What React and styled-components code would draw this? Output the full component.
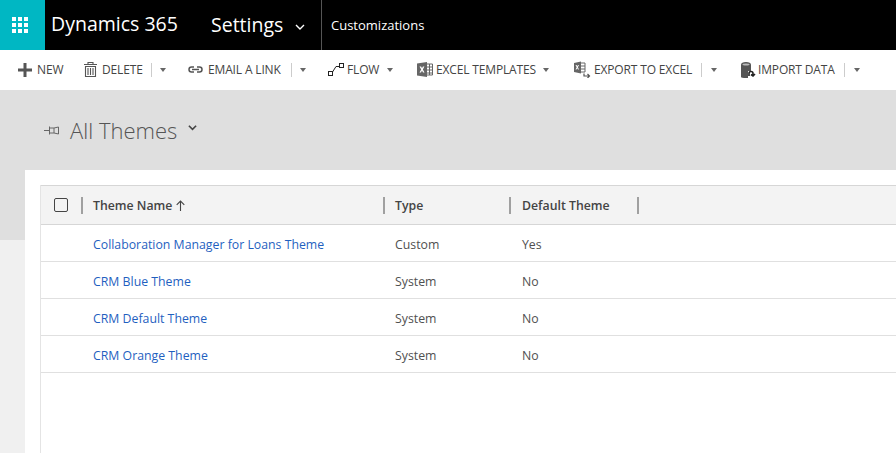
import React from "react";
import styled, { createGlobalStyle } from "styled-components";

const Global = createGlobalStyle`
  html, body { margin: 0; padding: 0; height: 100%; overflow: hidden; background: #f0f0f0; }
  body { font-family: "Open Sans", "Noto Sans", "Liberation Sans", sans-serif; }
  #root { height: 100%; }
`;
const Page = styled.div`display:flex;flex-direction:column;width:896px;height:453px;overflow:hidden;`;
const TopBar = styled.header`display:flex;align-items:stretch;height:50px;background:#000;color:#fff;flex:none;`;
const Tile = styled.div`width:45px;background:#00b7c3;display:flex;align-items:center;padding-left:12px;box-sizing:border-box;`;
const Brand = styled.div`width:166px;padding-left:6px;box-sizing:border-box;font-size:19.500px;line-height:48px;white-space:nowrap;`;
const Area = styled.div`display:flex;align-items:center;width:110px;font-size:19.500px;line-height:48px;gap:12px;`;
const AreaCaret = styled.span`display:flex;margin-top:3px;`;
const Crumb = styled.div`border-left:1px solid #555;padding-left:9px;font-size:13px;line-height:51px;`;
const Toolbar = styled.nav`height:40px;background:#fff;flex:none;position:relative;`;
const Cmd = styled.div`position:absolute;left:${p=>p.$x}px;top:0;height:39px;display:flex;align-items:center;color:#444;font-size:12px;font-weight:500;white-space:nowrap;letter-spacing:-.15px;`;
const Label = styled.span`margin-left:${p=>p.$m ?? 3}px;`;
const Split = styled.span`width:1px;height:14px;background:#ccc;margin-left:${p=>p.$m ?? 9}px;`;
const Caret = styled.span`width:0;height:0;border-left:3.500px solid transparent;border-right:3.500px solid transparent;border-top:4px solid #666;margin-left:${p=>p.$m ?? 9}px;`;
const Content = styled.main`flex:1;background:linear-gradient(#dfdfdf 150px,#f0f0f0 150px);display:flex;flex-direction:column;`;
const TitleRow = styled.div`height:80px;display:flex;align-items:center;padding-left:44px;box-sizing:border-box;color:#555;flex:none;`;
const Title = styled.h1`margin:0 0 0 11px;font-size:22px;font-weight:300;line-height:84px;color:#555;`;
const TitleCaret = styled.span`display:flex;margin:-6px 0 0 11px;`;
const Card = styled.section`flex:1;margin-left:25px;background:#fff;padding:15px 0 0 15px;`;
const Grid = styled.div`height:100%;border-left:1px solid #e4e4e4;`;
const HeadRow = styled.div`height:38px;display:flex;align-items:center;background:#f3f3f3;border-top:1px solid #d6d6d6;border-bottom:1px solid #d6d6d6;position:relative;`;
const Check = styled.span`width:12px;height:12px;border:1px solid #444;border-radius:2px;margin-left:13px;flex:none;`;
const Bar = styled.span`position:absolute;left:${p=>p.$x}px;top:11px;width:2px;height:17px;background:#a0a0a0;`;
const Th = styled.span`position:absolute;left:${p=>p.$x}px;font-size:12.300px;font-weight:600;color:#444;white-space:nowrap;display:flex;align-items:center;gap:4px;`;
const Row = styled.div`height:37px;display:flex;align-items:center;padding-top:2px;box-sizing:border-box;border-bottom:1px solid #e0e0e0;font-size:12.300px;color:#505050;`;
const NameCell = styled.a`width:302px;margin-left:52px;color:#1f5fbf;white-space:nowrap;flex:none;`;
const TypeCell = styled.span`width:127px;flex:none;`;

const Waffle = () => (
  <svg width="16" height="16" viewBox="0 0 16 16" fill="#fff">
    {[0,6,12].flatMap(y=>[0,6,12].map(x=><rect key={x+"-"+y} x={x} y={y} width="4" height="4"/>))}
  </svg>
);
const Chevron = ({s=10,c="#fff",w=1.4}) => (
  <svg width={s} height={s} viewBox="0 0 10 10" fill="none" stroke={c} strokeWidth={w}><path d="M1 3l4 4 4-4"/></svg>
);
const Plus = () => <svg width="14" height="14" viewBox="0 0 14 14" fill="#555"><path d="M5.500 0h3v5.500H14v3H8.500V14h-3V8.500H0v-3h5.500z"/></svg>;
const Trash = () => <svg width="13" height="15" viewBox="0 0 13 15" fill="none" stroke="#555"><path d="M0 2.500h13M4 2.500V.5h5v2M1.500 4.500h10V14.500h-10zM4 6v7M6.500 6v7M9 6v7" strokeWidth="1.100"/></svg>;
const LinkIcon = () => <svg width="15" height="8" viewBox="0 0 15 8" fill="none" stroke="#555" strokeWidth="1.500"><path d="M6 1H3.500a2.500 2.500 0 000 5H6M9 1h2.500a2.500 2.500 0 010 5H9M4 3.500h7"/></svg>;
const FlowIcon = () => <svg width="16" height="13" viewBox="0 0 16 13" fill="none" stroke="#222"><rect x=".5" y="8.500" width="4" height="4"/><rect x="11.500" y=".5" width="4" height="4"/><path d="M4.500 9L8 3.500h3.500"/></svg>;
const XlIcon = () => <svg width="16" height="15" viewBox="0 0 16 15"><path fill="#666" d="M0 1.500L10 0v15L0 13.500z"/><path fill="#fff" d="M2.500 4.500h1.600L5 6.300l.9-1.800h1.500L5.900 7.500l1.600 3H6l-1-2-1 2H2.500l1.700-3z"/><path fill="none" stroke="#666" d="M10 2h5.500v11H10M10 5h5.500M10 8h5.500M10 11h5.500M12.500 2v11"/></svg>;
const ExportIcon = () => <svg width="17" height="17" viewBox="0 0 17 17"><path fill="#666" d="M0 2l7-1.500v12L0 11z"/><path fill="#fff" d="M1.500 4h1l.8 1.300L4 4h1L3.900 6.300 5 8.500H4L3.300 7.200 2.500 8.500h-1l1.200-2.200z"/><path fill="none" stroke="#666" d="M7 2h4v9H7M7 5h4M7 8h4"/><path fill="none" stroke="#555" strokeWidth="1.200" d="M10 12.500v2.500h5M13.500 13l2 2-2 2"/></svg>;
const DbIcon = () => <svg width="15" height="16" viewBox="0 0 15 16"><path fill="#555" d="M0 2.500C0 1 2 0 5 0s5 1 5 2.500V15c0 .6-2 1-5 1s-5-.4-5-1z"/><ellipse cx="5" cy="2.500" rx="3.500" ry="1" fill="#bbb"/><path fill="#fff" d="M7 9h8v7H7z"/><path fill="none" stroke="#222" strokeWidth="1.600" d="M9 16v-2.500a2 2 0 014 0V15M11 14.500l2 1.500 2-2" transform="translate(-1 -2)"/></svg>;
const Pin = () => <svg width="15" height="9" viewBox="0 0 15 9" fill="none" stroke="#666"><path d="M0 4.500h5M5.500 .5v8M5.500 2h4.500l4.500-1v7L10 7H5.500M10 2v5"/></svg>;
const Arrow = () => <svg width="9" height="11" viewBox="0 0 9 11" fill="none" stroke="#444" strokeWidth="1.100"><path d="M4.500 11V1M.7 4.800L4.500 1l3.800 3.800"/></svg>;

const rows = [
  ["Collaboration Manager for Loans Theme","Custom","Yes"],
  ["CRM Blue Theme","System","No"],
  ["CRM Default Theme","System","No"],
  ["CRM Orange Theme","System","No"],
];

export default function App() {
  return (
    <Page>
      <Global />
      <TopBar>
        <Tile><Waffle /></Tile>
        <Brand>Dynamics 365</Brand>
        <Area>Settings <AreaCaret><Chevron /></AreaCaret></Area>
        <Crumb>Customizations</Crumb>
      </TopBar>
      <Toolbar>
        <Cmd $x={18}><Plus /><Label $m={5}>NEW</Label></Cmd>
        <Cmd $x={84}><Trash /><Label $m={5}>DELETE</Label><Split $m={8}/><Caret $m={8}/></Cmd>
        <Cmd $x={188}><LinkIcon /><Label $m={5}>EMAIL A LINK</Label><Split $m={10}/><Caret $m={8}/></Cmd>
        <Cmd $x={328}><FlowIcon /><Label $m={3}>FLOW</Label><Caret $m={8}/></Cmd>
        <Cmd $x={417}><XlIcon /><Label $m={3}>EXCEL TEMPLATES</Label><Caret $m={7}/></Cmd>
        <Cmd $x={574}><ExportIcon /><Label $m={3}>EXPORT TO EXCEL</Label><Split /><Caret /></Cmd>
        <Cmd $x={741}><DbIcon /><Label $m={2}>IMPORT DATA</Label><Split /><Caret /></Cmd>
      </Toolbar>
      <Content>
        <TitleRow>
          <Pin />
          <Title>All Themes</Title>
          <TitleCaret><Chevron s={9} c="#444" w={1.800}/></TitleCaret>
        </TitleRow>
        <Card>
          <Grid>
            <HeadRow>
              <Check />
              <Bar $x={40}/>
              <Th $x={52}>Theme Name <Arrow /></Th>
              <Bar $x={342}/>
              <Th $x={354}>Type</Th>
              <Bar $x={468}/>
              <Th $x={481}>Default Theme</Th>
              <Bar $x={596}/>
            </HeadRow>
            {rows.map(r=>(
              <Row key={r[0]}>
                <NameCell>{r[0]}</NameCell>
                <TypeCell>{r[1]}</TypeCell>
                <span>{r[2]}</span>
              </Row>
            ))}
          </Grid>
        </Card>
      </Content>
    </Page>
  );
}
